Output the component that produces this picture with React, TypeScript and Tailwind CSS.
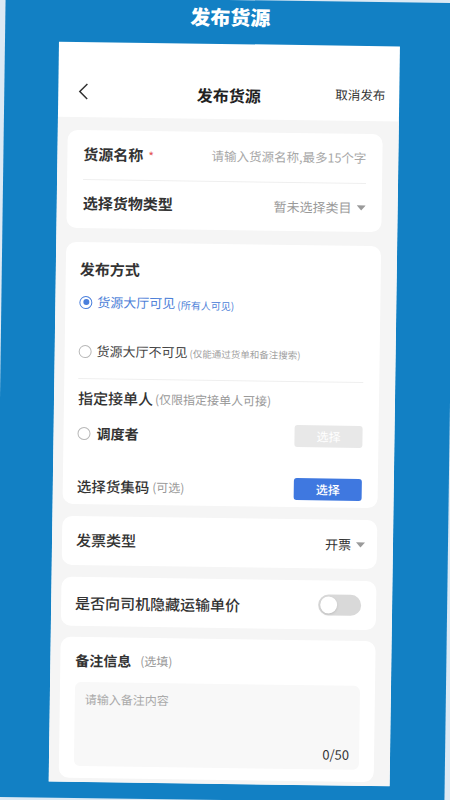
import React from "react";

const font = { fontFamily: '"Noto Sans CJK SC", "Noto Sans", sans-serif' };

function Caret() {
  return (
    <svg width="9" height="6" viewBox="0 0 9 6" className="ml-[5px]">
      <path d="M0 0.5 L9 0.5 L4.5 5.5 Z" fill="#9a9a9a" />
    </svg>
  );
}

function Radio({ checked }: { checked?: boolean }) {
  return checked ? (
    <span className="flex h-[13px] w-[13px] shrink-0 items-center justify-center rounded-full border-[1.5px] border-[#4a7fdc]">
      <span className="h-[6px] w-[6px] rounded-full bg-[#4a7fdc]" />
    </span>
  ) : (
    <span className="h-[13px] w-[13px] shrink-0 rounded-full border-[1.5px] border-[#b8b8b8]" />
  );
}

export default function App() {
  return (
    <div className="h-[800px] w-[450px] overflow-hidden bg-[#dce9f4]" style={font}>
      <div className="h-[800px] w-[450px] rotate-[0.8deg] bg-[#1280c4]">
        {/* poster title */}
        <div className="flex h-[44px] justify-center pt-[4px]">
          <span className="text-[20px] font-black leading-[26px] text-white">发布货源</span>
        </div>

        {/* phone screen */}
        <div className="ml-[54px] flex h-[740px] w-[341px] flex-col overflow-hidden bg-white">
          <div className="h-[31px]" />

          {/* nav bar */}
          <div className="relative flex h-[44px] items-center justify-center pb-[5px]">
            <svg width="10" height="17" viewBox="0 0 10 17" className="absolute left-[20px] top-[10px]">
              <polyline points="9,1 1.5,8.5 9,16" fill="none" stroke="#333" strokeWidth="1.5" />
            </svg>
            <span className="text-[16px] font-bold text-[#222]">发布货源</span>
            <span className="absolute right-[14px] top-[9px] text-[12.5px] text-[#333]">取消发布</span>
          </div>

          {/* form body */}
          <div className="flex flex-1 flex-col bg-[#f5f5f5] pl-[10px] pr-[16px] pt-[13px]">
            {/* goods name / type */}
            <div className="h-[98px] rounded-[10px] bg-white px-[16px]">
              <div className="flex h-[50px] items-center justify-between border-b border-[#efefef]">
                <div className="flex items-center">
                  <span className="text-[15px] font-semibold text-[#333]">货源名称</span>
                  <span className="ml-[5px] text-[12px] text-[#e35454]">*</span>
                </div>
                <span className="text-[12.5px] text-[#a8a8a8]">请输入货源名称,最多15个字</span>
              </div>
              <div className="flex h-[47px] items-center justify-between">
                <span className="text-[15px] font-semibold text-[#333]">选择货物类型</span>
                <div className="flex items-center">
                  <span className="text-[13px] text-[#9a9a9a]">暂未选择类目</span>
                  <Caret />
                </div>
              </div>
            </div>

            {/* publish mode */}
            <div className="mt-[14px] flex h-[262px] flex-col rounded-[10px] bg-white pl-[14px] pr-[16px]">
              <div className="mt-[16px] flex h-[22px] items-center">
                <span className="text-[15px] font-semibold text-[#333]">发布方式</span>
              </div>
              <div className="mt-[12px] flex h-[20px] items-center">
                <Radio checked />
                <span className="ml-[5px] text-[13px] text-[#4d7fd8]">货源大厅可见</span>
                <span className="ml-[2px] mt-[3px] text-[10px] text-[#4d7fd8]">(所有人可见)</span>
              </div>
              <div className="mt-[29px] flex h-[20px] items-center">
                <Radio />
                <span className="ml-[5px] text-[13px] text-[#444]">货源大厅不可见</span>
                <span className="ml-[2px] mt-[3px] text-[9.5px] text-[#a0a0a0]">(仅能通过货单和备注搜索)</span>
              </div>
              <div className="mt-[17px] h-px bg-[#efefef]" />
              <div className="mt-[8px] flex h-[22px] items-center">
                <span className="text-[15px] font-medium text-[#333]">指定接单人</span>
                <span className="ml-[2px] text-[12px] text-[#999]">(仅限指定接单人可接)</span>
              </div>
              <div className="mt-[13px] flex h-[22px] items-center justify-between">
                <div className="flex items-center">
                  <Radio />
                  <span className="ml-[6px] text-[14px] font-bold text-[#333]">调度者</span>
                </div>
                <button className="flex h-[22px] w-[68px] items-center justify-center rounded-[3px] bg-[#e8e8e8] text-[12px] text-white">
                  选择
                </button>
              </div>
              <div className="mt-[31px] flex h-[22px] items-center justify-between">
                <div className="flex items-center">
                  <span className="text-[14.5px] font-medium text-[#333]">选择货集码</span>
                  <span className="ml-[3px] text-[12px] text-[#999]">(可选)</span>
                </div>
                <button className="flex h-[22px] w-[68px] items-center justify-center rounded-[3px] bg-[#3f78e0] text-[12px] font-medium text-white">
                  选择
                </button>
              </div>
            </div>

            {/* invoice type */}
            <div className="mt-[12px] flex h-[49px] items-center justify-between rounded-[10px] bg-white pl-[14px] pr-[12px]">
              <span className="text-[15px] font-medium text-[#333]">发票类型</span>
              <div className="flex items-center">
                <span className="text-[13px] text-[#333]">开票</span>
                <Caret />
              </div>
            </div>

            {/* hide unit price */}
            <div className="mt-[12px] flex h-[49px] items-center justify-between rounded-[10px] bg-white pl-[14px] pr-[15px]">
              <span className="mt-[3px] text-[15px] font-medium text-[#333]">是否向司机隐藏运输单价</span>
              <div className="flex h-[21px] w-[43px] items-center rounded-full bg-[#d9d9d9] px-[2px]">
                <span className="h-[17px] w-[17px] rounded-full bg-white shadow-sm" />
              </div>
            </div>

            {/* remarks */}
            <div className="mt-[11px] flex h-[141px] flex-col rounded-[10px] bg-white px-[15px]">
              <div className="mt-[12px] flex h-[22px] items-center">
                <span className="text-[14px] font-bold text-[#333]">备注信息</span>
                <span className="ml-[9px] text-[12px] text-[#999]">(选填)</span>
              </div>
              <div className="mt-[11px] flex h-[84px] flex-col justify-between rounded-[6px] bg-[#f8f8f8] px-[10px] pb-[6px] pt-[8px]">
                <span className="text-[12px] text-[#aaa]">请输入备注内容</span>
                <span className="self-end text-[13px] text-[#333]">0/50</span>
              </div>
            </div>
          </div>
        </div>
      </div>
    </div>
  );
}
